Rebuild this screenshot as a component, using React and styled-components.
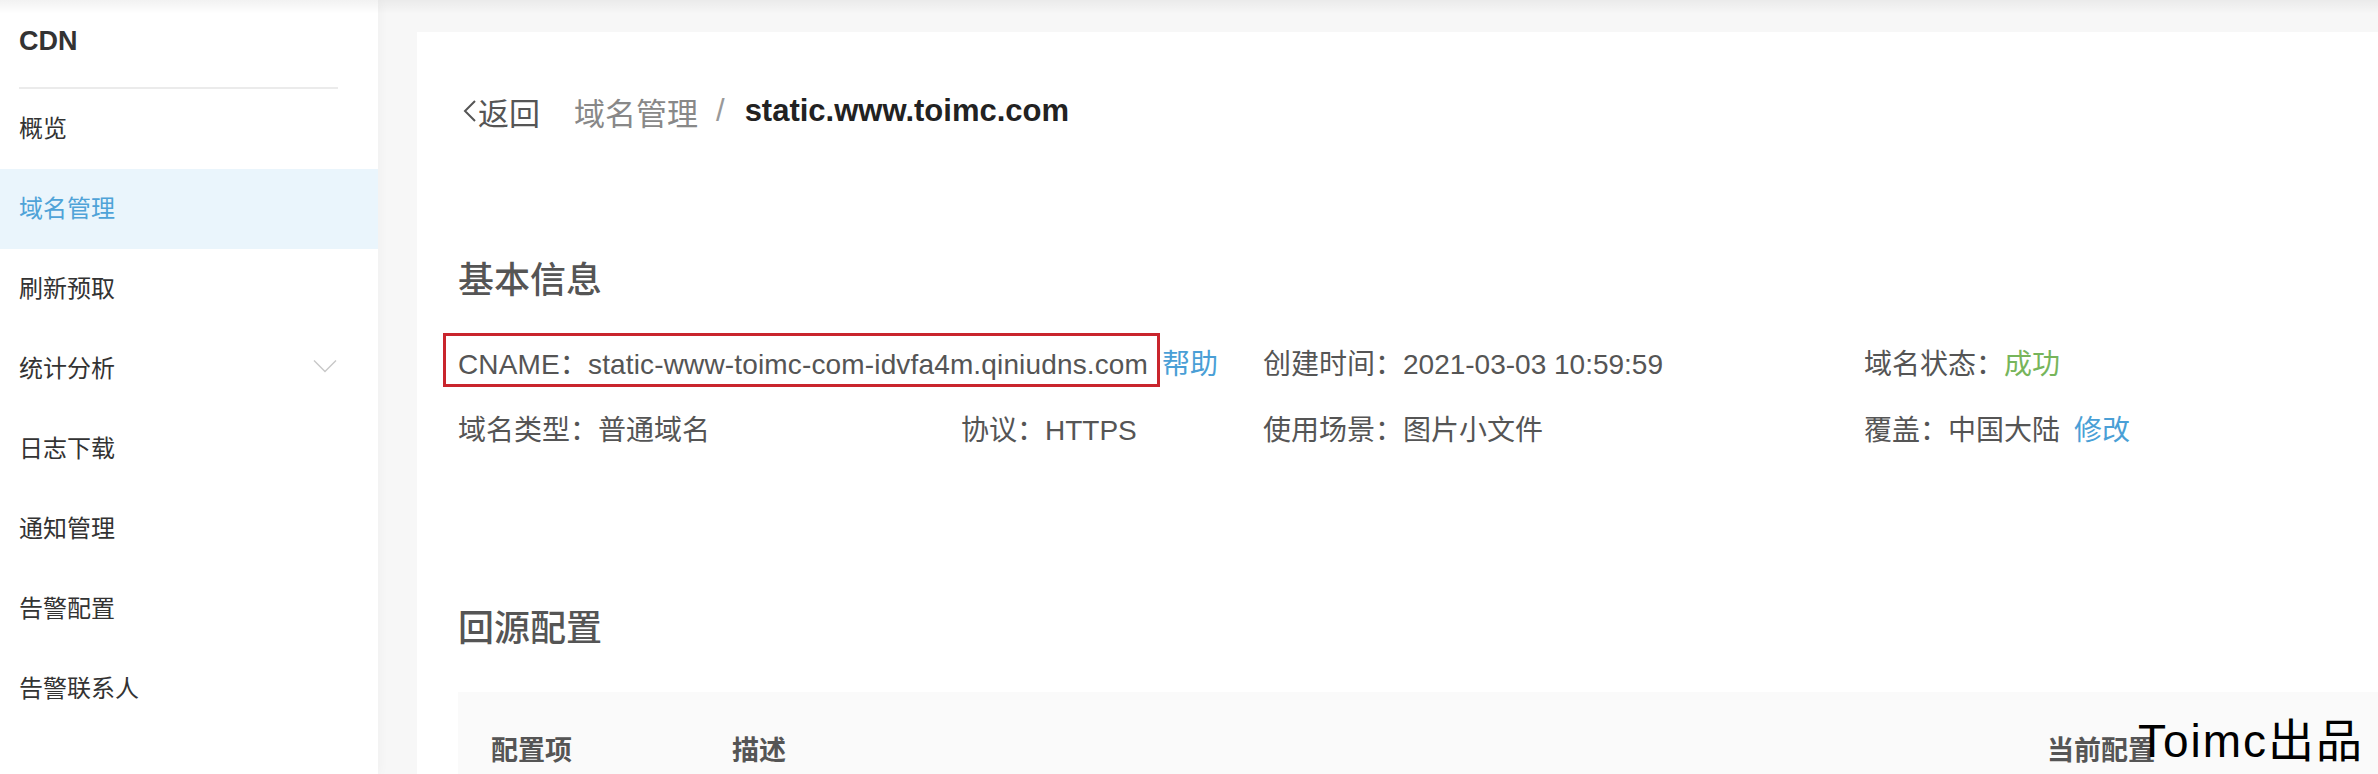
import styled, { createGlobalStyle } from "styled-components";

const GlobalStyle = createGlobalStyle`
  * {
    box-sizing: border-box;
  }

  html,
  body {
    margin: 0;
    padding: 0;
    background: #f7f7f7;
    font-family: "Liberation Sans", "Noto Sans CJK SC", sans-serif;
  }
`;

const Layout = styled.div`
  position: relative;
  display: flex;
  width: 2378px;
  height: 774px;
  overflow: hidden;
  background: #f7f7f7;

  /* faint shadow cast by the header above the crop */
  &::before {
    content: "";
    position: absolute;
    top: 0;
    left: 0;
    right: 0;
    height: 14px;
    background: linear-gradient(rgba(0, 0, 0, 0.05), rgba(0, 0, 0, 0));
    pointer-events: none;
    z-index: 2;
  }
`;

const Sidebar = styled.aside`
  width: 378px;
  flex-shrink: 0;
  background: #fff;
  box-shadow: 2px 0 10px rgba(0, 0, 0, 0.03);
  z-index: 1;
`;

const SideTitle = styled.div`
  height: 80px;
  display: flex;
  align-items: center;
  padding: 2px 0 0 19px;
  font-size: 27px;
  font-weight: 700;
  color: #333;
`;

const SideDivider = styled.div`
  height: 1.5px;
  margin: 7px 40px 0 19px;
  background: #ebebeb;
`;

const NavItem = styled.div`
  height: 80px;
  display: flex;
  align-items: center;
  justify-content: space-between;
  padding: 0 41px 5px 19px;
  font-size: 24px;
  color: ${(props) => (props.$active ? "#4fa3d8" : "#333")};
  background: ${(props) => (props.$active ? "#eaf5fc" : "transparent")};
`;

const Main = styled.main`
  flex: 1;
  display: flex;
  padding: 32px 0 0 39px;
`;

const Card = styled.section`
  flex: 1;
  background: #fff;
  padding: 59px 0 0 41px;
`;

const Breadcrumb = styled.div`
  display: flex;
  align-items: center;
  height: 40px;
  padding-left: 4px;
  font-size: 31px;
`;

const Back = styled.span`
  display: flex;
  align-items: center;
  color: #555;
  margin-right: 34px;
`;

const Crumb = styled.span`
  color: #888;
`;

const Slash = styled.span`
  color: #999;
  margin: 0 20px 0 18px;
`;

const Current = styled.span`
  color: #222;
  font-weight: 700;
`;

const SectionTitle = styled.h2`
  margin: ${(props) => props.$top}px 0 0;
  height: 50px;
  line-height: 50px;
  font-size: 36px;
  font-weight: 500;
  color: #555;
`;

const InfoGrid = styled.div`
  display: grid;
  grid-template-columns: 503px 302px 601px 1fr;
  grid-auto-rows: 66px;
  align-items: center;
  margin-top: 23px;
  font-size: 28px;
  color: #555;
`;

const Cell = styled.div`
  display: flex;
  align-items: center;
  gap: 14px;
  white-space: nowrap;
  grid-column: ${(props) => props.$span || "auto"};
`;

const Highlight = styled.span`
  position: relative;
  letter-spacing: 0.15px;

  &::after {
    content: "";
    position: absolute;
    left: -15px;
    right: -12px;
    top: -9px;
    bottom: -5px;
    border: 3px solid #c9252d;
  }
`;

const Link = styled.span`
  color: #4a9fd6;
`;

const Success = styled.span`
  color: #77b55b;
`;

const TableHead = styled.div`
  display: grid;
  grid-template-columns: 241px 1315px auto;
  align-items: center;
  height: 112px;
  margin-top: 38px;
  padding-left: 33px;
  background: #fafafa;
  font-size: 27px;
  font-weight: 700;
  color: #555;
`;

const Watermark = styled.div`
  position: absolute;
  right: 14px;
  bottom: 10px;
  font-size: 46px;
  line-height: 1;
  letter-spacing: 2px;
  color: #000;
  z-index: 3;
`;

const Chevron = () => (
  <svg width="24" height="14" viewBox="0 0 24 14" fill="none">
    <path d="M1 1.5 L12 12.5 L23 1.5" stroke="#c8c8c8" strokeWidth="1.4" />
  </svg>
);

const BackArrow = () => (
  <svg width="16" height="26" viewBox="0 0 16 26" fill="none">
    <path d="M13 3 L3 13 L13 23" stroke="#555" strokeWidth="2" />
  </svg>
);

const navItems = [
  "概览",
  "域名管理",
  "刷新预取",
  "统计分析",
  "日志下载",
  "通知管理",
  "告警配置",
  "告警联系人",
];

export default function App() {
  return (
    <>
      <GlobalStyle />
      <Layout>
        <Sidebar>
          <SideTitle>CDN</SideTitle>
          <SideDivider />
          {navItems.map((item) => (
            <NavItem key={item} $active={item === "域名管理"}>
              {item}
              {item === "统计分析" && <Chevron />}
            </NavItem>
          ))}
        </Sidebar>

        <Main>
          <Card>
            <Breadcrumb>
              <Back>
                <BackArrow />
                返回
              </Back>
              <Crumb>域名管理</Crumb>
              <Slash>/</Slash>
              <Current>static.www.toimc.com</Current>
            </Breadcrumb>

            <SectionTitle $top={125}>基本信息</SectionTitle>
            <InfoGrid>
              <Cell $span="span 2">
                <Highlight>CNAME：static-www-toimc-com-idvfa4m.qiniudns.com</Highlight>
                <Link>帮助</Link>
              </Cell>
              <Cell>创建时间：2021-03-03 10:59:59</Cell>
              <Cell>
                <span>
                  域名状态：<Success>成功</Success>
                </span>
              </Cell>
              <Cell>域名类型：普通域名</Cell>
              <Cell>协议：HTTPS</Cell>
              <Cell>使用场景：图片小文件</Cell>
              <Cell>
                <span>覆盖：中国大陆</span>
                <Link>修改</Link>
              </Cell>
            </InfoGrid>

            <SectionTitle $top={143}>回源配置</SectionTitle>
            <TableHead>
              <span>配置项</span>
              <span>描述</span>
              <span>当前配置</span>
            </TableHead>
          </Card>
        </Main>

        <Watermark>Toimc出品</Watermark>
      </Layout>
    </>
  );
}
